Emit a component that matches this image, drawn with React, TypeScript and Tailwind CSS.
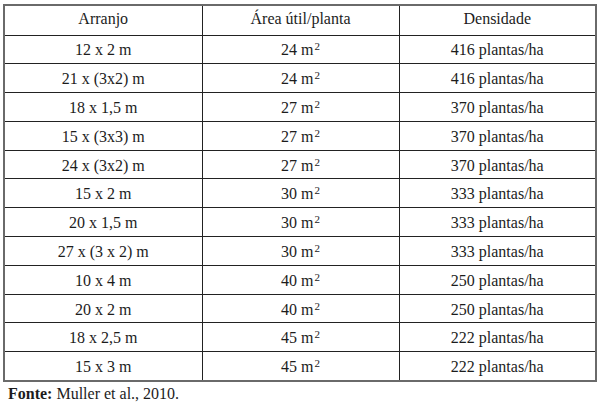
import React from "react";

const rows: [string, string, string][] = [
  ["12 x 2 m", "24", "416 plantas/ha"],
  ["21 x (3x2) m", "24", "416 plantas/ha"],
  ["18 x 1,5 m", "27", "370 plantas/ha"],
  ["15 x (3x3) m", "27", "370 plantas/ha"],
  ["24 x (3x2) m", "27", "370 plantas/ha"],
  ["15 x 2 m", "30", "333 plantas/ha"],
  ["20 x 1,5 m", "30", "333 plantas/ha"],
  ["27 x (3 x 2) m", "30", "333 plantas/ha"],
  ["10 x 4 m", "40", "250 plantas/ha"],
  ["20 x 2 m", "40", "250 plantas/ha"],
  ["18 x 2,5 m", "45", "222 plantas/ha"],
  ["15 x 3 m", "45", "222 plantas/ha"],
];

export default function App() {
  return (
    <div
      className="w-[600px] h-[406px] bg-white text-[#1c1c1c] pt-[4px] pl-[3px]"
      style={{ fontFamily: '"Liberation Serif", "Times New Roman", serif' }}
    >
      <table className="w-[594px] border-collapse border-2 border-[#6a6a6a] text-[16px] leading-none table-fixed">
        <thead>
          <tr className="h-[30px]">
            <th className="w-[198px] font-normal text-center border border-[#222] pb-[2px]">Arranjo</th>
            <th className="w-[197px] font-normal text-center border border-[#222] pb-[2px]">Área útil/planta</th>
            <th className="font-normal text-center border border-[#222] pb-[2px]">Densidade</th>
          </tr>
        </thead>
        <tbody>
          {rows.map((r, i) => (
            <tr key={i} className="h-[28.8px]">
              <td className="text-center border border-[#222] pt-[2px]">{r[0]}</td>
              <td className="text-center border border-[#222] pt-[2px]">
                {r[1]} m<sup className="text-[11px] relative -top-[5px] ml-[1px]">2</sup>
              </td>
              <td className="text-center border border-[#222] pt-[2px]">{r[2]}</td>
            </tr>
          ))}
        </tbody>
      </table>
      <div className="text-[16px] leading-none mt-[4px] pl-[5px]">
        <span className="font-bold">Fonte:</span> Muller et al., 2010.
      </div>
    </div>
  );
}
